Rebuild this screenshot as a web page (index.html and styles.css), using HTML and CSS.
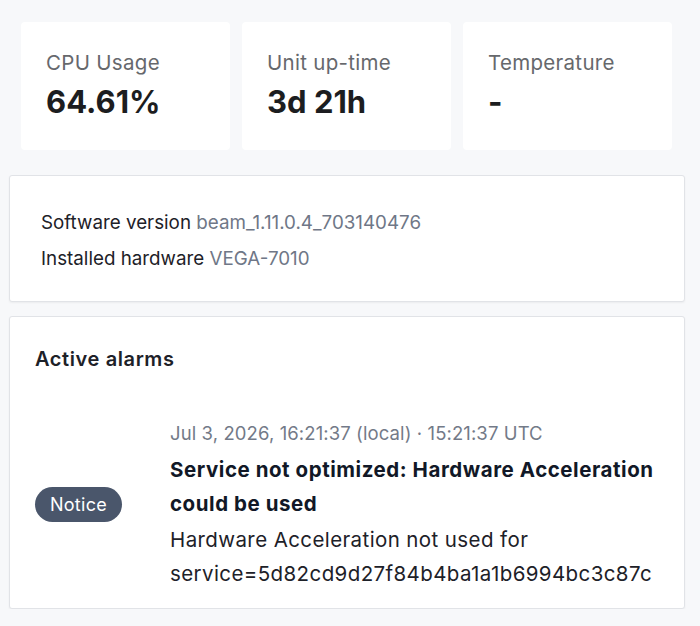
FILE: index.html
```html
<!DOCTYPE html>
<html lang="en">
<head>
<meta charset="utf-8">
<title>Unit status</title>
<link rel="stylesheet" href="styles.css">
</head>
<body>
<main class="page">
  <section class="stats">
    <div class="stat">
      <div class="stat-label">CPU Usage</div>
      <div class="stat-value">64.61%</div>
    </div>
    <div class="stat">
      <div class="stat-label">Unit up-time</div>
      <div class="stat-value">3d 21h</div>
    </div>
    <div class="stat">
      <div class="stat-label">Temperature</div>
      <div class="stat-value">-</div>
    </div>
  </section>

  <section class="card info">
    <div class="info-row"><span class="info-key">Software version</span> <span class="info-val">beam_1.11.0.4_703140476</span></div>
    <div class="info-row"><span class="info-key">Installed hardware</span> <span class="info-val">VEGA-7010</span></div>
  </section>

  <section class="card alarms">
    <h2 class="alarms-title">Active alarms</h2>
    <div class="alarm">
      <div class="alarm-side"><span class="badge">Notice</span></div>
      <div class="alarm-body">
        <div class="alarm-time">Jul 3, 2026, 16:21:37 (local) · 15:21:37 UTC</div>
        <div class="alarm-head">Service not optimized: Hardware Acceleration could be used</div>
        <div class="alarm-desc">Hardware Acceleration not used for service=5d82cd9d27f84b4ba1a1b6994bc3c87c</div>
      </div>
    </div>
  </section>
</main>
</body>
</html>
```
FILE: styles.css
```css
html, body {
  margin: 0;
  padding: 0;
  background: #f7f8fa;
  font-family: "Inter", "Liberation Sans", sans-serif;
  color: #1a1d23;
}

.page {
  width: 676px;
  margin-left: 9px;
  display: flex;
  flex-direction: column;
}

.stats {
  display: grid;
  grid-template-columns: repeat(3, 1fr);
  gap: 12px;
  padding: 22px 13px 0 12px;
}

.stat {
  background: #ffffff;
  border-radius: 4px;
  height: 128px;
  box-sizing: border-box;
  padding: 27px 25px 0 25px;
}

.stat-label {
  font-size: 20.5px;
  line-height: 28px;
  letter-spacing: 0.3px;
  color: #66686c;
}

.stat-value {
  margin-top: 6px;
  font-size: 31px;
  line-height: 38px;
  font-weight: 700;
  color: #1c1d20;
}

.card {
  background: #ffffff;
  border: 1px solid #e1e3e7;
  border-radius: 3px;
  box-shadow: 0 1px 2px rgba(0, 0, 0, 0.05);
}

.info {
  margin-top: 25px;
  height: 127px;
  box-sizing: border-box;
  padding: 29px 31px 0 31px;
}

.info-row {
  font-size: 18.8px;
  line-height: 36px;
  color: #1d2128;
}

.info-val {
  color: #6f7787;
}

.alarms {
  margin-top: 14px;
  height: 293px;
  box-sizing: border-box;
  padding: 27px 25px 0 25px;
}

.alarms-title {
  margin: 0;
  font-size: 20px;
  line-height: 30px;
  letter-spacing: 0.6px;
  font-weight: 600;
  color: #1d2128;
}

.alarm {
  margin-top: 40px;
  display: flex;
  align-items: center;
}

.alarm-side {
  width: 135px;
  flex: none;
  padding-top: 4px;
}

.badge {
  display: inline-flex;
  align-items: center;
  justify-content: center;
  width: 87px;
  height: 35px;
  border-radius: 18px;
  background: #4a566b;
  color: #ffffff;
  font-size: 18px;
  letter-spacing: 0.3px;
}

.alarm-body {
  flex: 1;
  font-size: 20.5px;
  line-height: 34px;
}

.alarm-time {
  font-size: 18.5px;
  line-height: 38px;
  letter-spacing: 0.1px;
  color: #737a88;
}

.alarm-head {
  margin-top: 1px;
  font-weight: 700;
  letter-spacing: 0.55px;
  color: #111827;
}

.alarm-desc {
  margin-top: 2px;
  letter-spacing: 0.4px;
  color: #1d2128;
}
```
